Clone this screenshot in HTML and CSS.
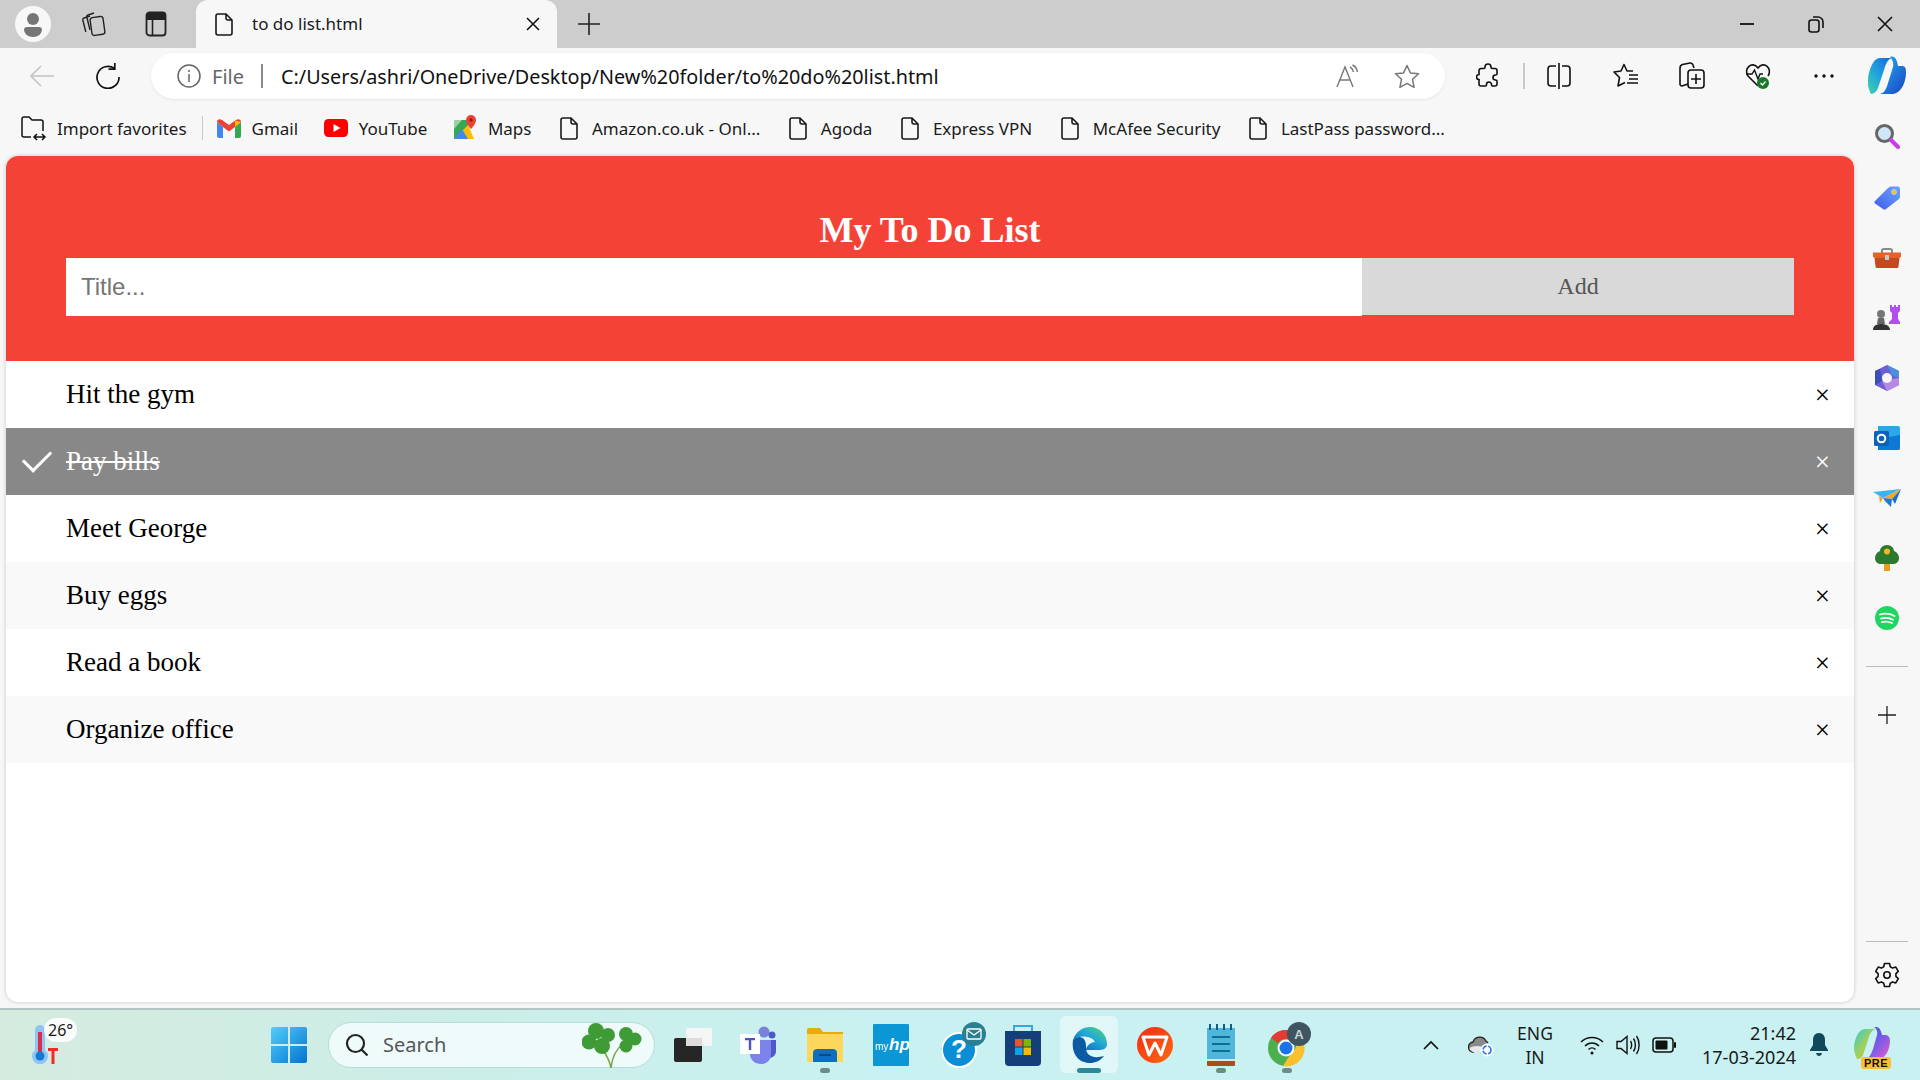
FILE: index.html
```html
<!DOCTYPE html>
<html lang="en">
<head>
<meta charset="utf-8">
<title>to do list.html</title>
<link rel="stylesheet" href="styles.css">
</head>
<body>
<svg class="defs" width="0" height="0" aria-hidden="true">
  <defs>
    <symbol id="doc" viewBox="0 0 18 23"><path d="M1 3a2 2 0 0 1 2-2h8l6 6v13a2 2 0 0 1-2 2H3a2 2 0 0 1-2-2zM11 1v4a2 2 0 0 0 2 2h4" fill="none" stroke="#1a1a1a" stroke-width="1.6" stroke-linejoin="round"/></symbol>
    <linearGradient id="copilotA" x1="0" y1="1" x2="1" y2="0"><stop offset="0" stop-color="#3dd6a8"/><stop offset=".5" stop-color="#1f9fe0"/><stop offset="1" stop-color="#1665d8"/></linearGradient>
    <linearGradient id="copilotB" x1="0" y1="0" x2="1" y2="1"><stop offset="0" stop-color="#22b8ef"/><stop offset="1" stop-color="#1b3fc4"/></linearGradient>
    <linearGradient id="tagG" x1="0" y1="1" x2="1" y2="0"><stop offset="0" stop-color="#3d5cf0"/><stop offset="1" stop-color="#6ea4fb"/></linearGradient>
    <linearGradient id="winG" x1="0" y1="0" x2="1" y2="1"><stop offset="0" stop-color="#4fd0fb"/><stop offset="1" stop-color="#0672cf"/></linearGradient>
    <linearGradient id="edgeG" x1="0" y1="1" x2="1" y2="0"><stop offset="0" stop-color="#0b57a8"/><stop offset=".55" stop-color="#1fa8d8"/><stop offset="1" stop-color="#5cd86c"/></linearGradient>
    <linearGradient id="wpsG" x1="0" y1="0" x2="1" y2="1"><stop offset="0" stop-color="#f62a12"/><stop offset="1" stop-color="#fb6a12"/></linearGradient>
    <linearGradient id="preG" x1="0" y1="0" x2="1" y2="1"><stop offset="0" stop-color="#33c9d8"/><stop offset=".5" stop-color="#9fd25a"/><stop offset="1" stop-color="#f0a040"/></linearGradient>
    <linearGradient id="preH" x1="0" y1="0" x2="1" y2="1"><stop offset="0" stop-color="#2a56e0"/><stop offset=".6" stop-color="#8a5be6"/><stop offset="1" stop-color="#ee5ec0"/></linearGradient>
  </defs>
</svg>

<div class="tabbar">
  <div class="tab-left">
    <span class="avatar"><svg width="36" height="36" viewBox="0 0 36 36"><circle cx="18" cy="18" r="18" fill="#f7f7f7"/><circle cx="18" cy="13" r="6" fill="#757575"/><path d="M9 23a3 3 0 0 1 3-2h12a3 3 0 0 1 3 2c0 5-4 8-9 8s-9-3-9-8z" fill="#757575"/></svg></span>
    <span class="tab-tool"><svg width="26" height="28" viewBox="0 0 26 28" fill="none" stroke="#222" stroke-width="1.4"><path d="M10 6 4 8c-1 .4-1.400 1-1.200 2l3 12"/><path d="M14 3 8 5c-1 .4-1.400 1-1.200 2l3.200 13"/><rect x="11" y="7" width="13" height="18" rx="2.500" transform="rotate(-8 17 16)"/></svg></span>
    <span class="tab-tool"><svg width="22" height="26" viewBox="0 0 22 26"><rect x="1.500" y="1.500" width="19" height="23" rx="3" fill="none" stroke="#222" stroke-width="1.800"/><path d="M1.500 4.500a3 3 0 0 1 3-3h13a3 3 0 0 1 3 3V9h-19z" fill="#222"/><path d="M7.500 9v15" stroke="#222" stroke-width="1.600"/></svg></span>
  </div>
  <div class="tab">
    <svg width="18" height="23"><use href="#doc"/></svg>
    <span class="tab-title">to do list.html</span>
    <svg class="tab-close" width="14" height="14" viewBox="0 0 14 14"><path d="M1 1l12 12M13 1 1 13" stroke="#111" stroke-width="1.600"/></svg>
  </div>
  <span class="tab-new"><svg width="22" height="22" viewBox="0 0 22 22"><path d="M11 0v22M0 11h22" stroke="#222" stroke-width="1.600"/></svg></span>
  <div class="win-ctrls">
    <span class="win-btn"><svg width="16" height="16" viewBox="0 0 16 16"><path d="M1 8h14" stroke="#111" stroke-width="1.800"/></svg></span>
    <span class="win-btn"><svg width="16" height="18" viewBox="0 0 16 18" fill="none" stroke="#111" stroke-width="1.600"><rect x="1" y="5" width="10" height="12" rx="2.500"/><path d="M5 2h5a5 5 0 0 1 5 5v6"/></svg></span>
    <span class="win-btn"><svg width="16" height="16" viewBox="0 0 16 16"><path d="M1 1l14 14M15 1 1 15" stroke="#111" stroke-width="1.600"/></svg></span>
  </div>
</div>

<div class="toolbar">
  <span class="tool"><svg width="24" height="22" viewBox="0 0 24 22" fill="none" stroke="#c4c4c4" stroke-width="1.600"><path d="M24 11H1M11 1 1 11l10 10"/></svg></span>
  <span class="tool"><svg width="24" height="26" viewBox="0 0 24 26" fill="none" stroke="#111" stroke-width="1.700"><path d="M18.500 5.500A11 11 0 1 0 23 14"/><path d="M18.800 0v6.200h-6.300"/></svg></span>
  <div class="address">
    <svg width="24" height="24" viewBox="0 0 24 24" fill="none" stroke="#666" stroke-width="1.500"><circle cx="12" cy="12" r="11"/><path d="M12 10v8M12 6v2"/></svg>
    <span class="addr-file">File</span>
    <span class="addr-sep"></span>
    <span class="addr-url">C:/Users/ashri/OneDrive/Desktop/New%20folder/to%20do%20list.html</span>
    <span class="addr-right">
      <svg width="24" height="24" viewBox="0 0 24 24" fill="none" stroke="#777" stroke-width="1.400"><path d="M1 23 9 3l8 20M4 16h10"/><path d="M14 3c2 1 3 2.500 3.500 5M16.500 1c3 1.500 4.500 3.500 5 7"/></svg>
      <svg width="26" height="25" viewBox="0 0 26 25" fill="none" stroke="#777" stroke-width="1.500"><path d="m13 1.500 3.400 7.400 8.100.9-6 5.500 1.600 8-7.100-4-7.100 4 1.600-8-6-5.500 8.100-.9z" stroke-linejoin="round"/></svg>
    </span>
  </div>
  <span class="tool"><svg width="24" height="26" viewBox="0 0 24 26" fill="none" stroke="#111" stroke-width="1.600"><path d="M9 4a3 3 0 0 1 6 0c0 1 0 1.500 1 1.500h3a2 2 0 0 1 2 2V11c0 1-.5 1-1.500 1a2.500 2.500 0 0 0 0 5c1 0 1.500 0 1.500 1v3a2 2 0 0 1-2 2h-2.500c-1 0-1-.5-1-1.500a2.500 2.500 0 0 0-5 0c0 1 0 1.500-1 1.500H5a2 2 0 0 1-2-2v-3c0-1 .5-1.200 0-1.500a2.500 2.500 0 0 1 0-5c.5-.3 0-.5 0-1.500V7.500a2 2 0 0 1 2-2h3c1 0 1-.5 1-1.500z" stroke-linejoin="round"/></svg></span>
  <span class="tool-sep"></span>
  <span class="tool"><svg width="24" height="26" viewBox="0 0 24 26" fill="none" stroke="#111" stroke-width="1.600"><path d="M9 3H4a3 3 0 0 0-3 3v14a3 3 0 0 0 3 3h5M15 3h5a3 3 0 0 1 3 3v14a3 3 0 0 1-3 3h-5M12 0v26"/></svg></span>
  <span class="tool"><svg width="26" height="26" viewBox="0 0 26 26" fill="none" stroke="#111" stroke-width="1.600" stroke-linejoin="round"><path d="M20 8h-6L11 1.500 8 8l-7 1 5.500 5.500L5 23l7-3.500"/><path d="M16 12h9M16 16h9M14 20h11"/></svg></span>
  <span class="tool"><svg width="26" height="28" viewBox="0 0 26 28" fill="none" stroke="#111" stroke-width="1.600"><path d="M9 22 3 24c-1 0-1.700-.5-2-1.500L1 6c0-2 1-3 2.500-3.500L11 1c1.500-.3 2.500.5 3 2l1 3"/><rect x="9" y="8" width="16" height="18" rx="3"/><path d="M17 12v10M12 17h10"/></svg></span>
  <span class="tool"><svg width="26" height="30" viewBox="0 0 26 30"><path d="M13 25 3 15C-2 8 7-1 13 7c6-8 15 1 10 8" fill="none" stroke="#111" stroke-width="1.600"/><path d="M1 13h6l2.500-4 3.500 9 2-5h3" fill="none" stroke="#111" stroke-width="1.400"/><circle cx="18" cy="22" r="6" fill="#177a2a"/><path d="m15.500 22 2 2 3-3.500" fill="none" stroke="#fff" stroke-width="1.400"/></svg></span>
  <span class="tool"><svg width="20" height="4" viewBox="0 0 20 4" fill="#111"><circle cx="2" cy="2" r="1.700"/><circle cx="10" cy="2" r="1.700"/><circle cx="18" cy="2" r="1.700"/></svg></span>
  <span class="tool tool-copilot"><svg width="38" height="40" viewBox="0 0 38 40"><path d="M12 2h12c-4 1-6 5-8 12L10 32c-1 3-4 6-7 6-2-4-4-9-3-15 1-9 5-21 12-21z" fill="url(#copilotA)"/><path d="M22 1c5-2 7 3 8 9h4c3 0 4 2 4 6 0 12-6 22-14 22H12c4-1 6-4 8-11l5-16c1-4-1-8-3-10z" fill="url(#copilotB)"/></svg></span>
</div>

<div class="middle">
  <div class="content-col">
    <div class="bookmarks">
      <span class="bm">
        <svg width="26" height="26" viewBox="0 0 26 26" fill="none" stroke="#111" stroke-width="1.500"><path d="M11 22H4a2 2 0 0 1-2-2V4a2 2 0 0 1 2-2h5l3 3h9a2 2 0 0 1 2 2v9"/><path d="M14 22h11M17 19l-3 3 3 3M22 19l3 3-3 3"/></svg>
        <span>Import favorites</span>
      </span>
      <span class="bm-sep"></span>
      <span class="bm">
        <svg width="24" height="19" viewBox="0 0 24 19"><path d="M0 3v14a2 2 0 0 0 2 2h4V8z" fill="#4285f4"/><path d="M24 3v14a2 2 0 0 1-2 2h-4V8z" fill="#34a853"/><path d="M0 3c0-3 3-3.500 5-2l7 5 7-5c2-1.500 5-1 5 2l-6 5-6 4.500L6 8z" fill="#ea4335"/><path d="M18 1.500 24 3l-6 5z" fill="#fbbc04"/></svg>
        <span>Gmail</span>
      </span>
      <span class="bm">
        <svg width="24" height="18" viewBox="0 0 24 18"><rect width="24" height="18" rx="4.500" fill="#f00"/><path d="m9.500 5 7 4-7 4z" fill="#fff"/></svg>
        <span>YouTube</span>
      </span>
      <span class="bm">
        <svg width="24" height="26" viewBox="0 0 24 26"><path d="M1 5h14v19H1z" fill="#35a853"/><path d="M1 24 15 10l6 14z" fill="#fbbc04"/><path d="M1 24 9 14l6 10z" fill="#4285f4"/><path d="M1 5h8L1 14z" fill="#9fd0a5"/><path d="M18 0a5 5 0 0 1 5 5c0 4-5 9-5 9s-5-5-5-9a5 5 0 0 1 5-5z" fill="#ea4335"/><circle cx="18" cy="5" r="1.700" fill="#8e1d14"/></svg>
        <span>Maps</span>
      </span>
      <span class="bm"><svg class="bm-doc" width="18" height="23"><use href="#doc"/></svg><span>Amazon.co.uk - Onl...</span></span>
      <span class="bm"><svg class="bm-doc" width="18" height="23"><use href="#doc"/></svg><span>Agoda</span></span>
      <span class="bm"><svg class="bm-doc" width="18" height="23"><use href="#doc"/></svg><span>Express VPN</span></span>
      <span class="bm"><svg class="bm-doc" width="18" height="23"><use href="#doc"/></svg><span>McAfee Security</span></span>
      <span class="bm"><svg class="bm-doc" width="18" height="23"><use href="#doc"/></svg><span>LastPass password...</span></span>
    </div>

    <main class="page">
      <header class="todo-head">
        <h2 class="todo-title">My To Do List</h2>
        <div class="todo-form">
          <input class="todo-input" type="text" placeholder="Title...">
          <button class="todo-add" type="button">Add</button>
        </div>
      </header>
      <ul class="todo-list">
        <li class="todo-item"><span>Hit the gym</span><span class="todo-close">×</span></li>
        <li class="todo-item is-checked"><span class="todo-text-done">Pay bills</span><span class="todo-close">×</span></li>
        <li class="todo-item"><span>Meet George</span><span class="todo-close">×</span></li>
        <li class="todo-item"><span>Buy eggs</span><span class="todo-close">×</span></li>
        <li class="todo-item"><span>Read a book</span><span class="todo-close">×</span></li>
        <li class="todo-item"><span>Organize office</span><span class="todo-close">×</span></li>
      </ul>
    </main>
  </div>

  <aside class="sidebar">
    <span class="side-icon"><svg width="26" height="26" viewBox="0 0 26 26"><circle cx="10.500" cy="10.500" r="8" fill="#cfe6f7" stroke="#666" stroke-width="3"/><path d="m17 17 7 7" stroke="#c83ce8" stroke-width="4" stroke-linecap="round"/></svg></span>
    <span class="side-icon"><svg width="26" height="24" viewBox="0 0 26 24"><path d="M1 15 14 2c1-1 2-1.500 3-1.500h7c1 0 2 1 2 2v8c0 1-.5 2-1 2.500L12 23c-1 1-2 1-3 0L1 17.500c-.7-.7-.7-1.800 0-2.500z" fill="url(#tagG)"/><circle cx="20" cy="6" r="2.500" fill="#f5c518" stroke="#b9c0ff"/></svg></span>
    <span class="side-icon"><svg width="28" height="20" viewBox="0 0 28 20"><path d="M9 5V2.500C9 1.500 10 1 11 1h6c1 0 2 .5 2 1.500V5" fill="none" stroke="#8a8a8a" stroke-width="2"/><path d="M0 4.500h28V9L26 10H2L0 9z" fill="#e2622a"/><path d="M1.500 10h25l-1 8.500c0 1-1 1.500-2 1.500H4.500c-1 0-2-.5-2-1.500z" fill="#c24a1e"/><rect x="12" y="7" width="4" height="5" fill="#c9c9c9"/></svg></span>
    <span class="side-icon"><svg width="28" height="26" viewBox="0 0 28 26"><path d="M17 0h2v2h2V0h2v2h2V0h2v6l-2 2v6l2 3v2H16v-2l3-3V8l-2-2z" fill="#b24df0"/><circle cx="8" cy="9" r="4" fill="#777"/><path d="M5 13h6l1 6H4z" fill="#666"/><path d="M0 25c0-4 3-6 8-6s9 2 9 6z" fill="#333"/></svg></span>
    <span class="side-icon"><svg width="24" height="26" viewBox="0 0 24 26"><path d="M12 0 24 6v14l-12 6L0 20V6z" fill="#6d5fd6"/><path d="M12 0 24 6v7l-7-3z" fill="#4a8fe0"/><path d="M0 6l5-2 2 12-7 4z" fill="#3a4fb8"/><path d="m7 16 17-3v7l-12 6z" fill="#b48ae6"/><circle cx="12" cy="13" r="5" fill="#f7f7f7"/></svg></span>
    <span class="side-icon"><svg width="26" height="24" viewBox="0 0 26 24"><path d="M4 0h20a2 2 0 0 1 2 2v20a2 2 0 0 1-2 2H4z" fill="#28a8ea"/><path d="M4 13l22-4v13a2 2 0 0 1-2 2H4z" fill="#0f78d4"/><rect y="5" width="15" height="15" rx="1.500" fill="#0b62b8"/><circle cx="7.500" cy="12.500" r="3.800" fill="none" stroke="#fff" stroke-width="2"/></svg></span>
    <span class="side-icon"><svg width="28" height="18" viewBox="0 0 28 18"><path d="M0 3 28 0 10 9z" fill="#38b4f4"/><path d="m10 9 18-9-9 10z" fill="#f2a91d"/><path d="M6 7 10 9l-3 5z" fill="#f29a1d"/><path d="m10 9 9 1-1 8-6-6z" fill="#1e78e0"/><path d="M28 0 19 10l3 5z" fill="#1e6bd0"/></svg></span>
    <span class="side-icon"><svg width="24" height="26" viewBox="0 0 24 26"><rect x="9" y="17" width="6" height="9" rx="1" fill="#e89b1c"/><path d="M12 0c4 0 7 3 7 6 3 1 5 4 5 7 0 4-3 6-6 6H6c-3 0-6-2-6-6 0-3 2-6 5-7 0-3 3-6 7-6z" fill="#2b7a2d"/><circle cx="12" cy="6.500" r="3" fill="#f3b61f"/></svg></span>
    <span class="side-icon"><svg width="24" height="24" viewBox="0 0 24 24"><circle cx="12" cy="12" r="12" fill="#1ed760"/><path d="M5 8.500c5-1.500 10-1 14.500 1.500M6 12.500c4-1 8.500-.8 12 1.300M7 16c3.500-.8 7-.5 10 1" fill="none" stroke="#fff" stroke-width="1.800" stroke-linecap="round"/></svg></span>
    <span class="side-line side-line-top"></span>
    <span class="side-add"><svg width="18" height="18" viewBox="0 0 18 18"><path d="M9 0v18M0 9h18" stroke="#222" stroke-width="1.300"/></svg></span>
    <span class="side-line side-line-bottom"></span>
    <span class="side-gear"><svg width="26" height="26" viewBox="0 0 26 26" fill="none" stroke="#111" stroke-width="1.600" stroke-linejoin="round"><path d="M10.500 1.500h5l.8 3.300 2.300 1.300 3.200-1 2.500 4.300-2.400 2.300v2.600l2.400 2.300-2.500 4.300-3.200-1-2.300 1.300-.8 3.300h-5l-.8-3.300-2.300-1.300-3.200 1L1.700 16.600l2.400-2.300v-2.600L1.700 9.400l2.500-4.300 3.200 1 2.300-1.300z"/><circle cx="13" cy="13" r="3.200"/></svg></span>
  </aside>
</div>

<footer class="taskbar">
  <div class="weather">
    <svg width="30" height="42" viewBox="0 0 30 42"><path d="M3 6a5 5 0 0 1 10 0v20a8 8 0 1 1-10 0z" fill="#8fc4f4"/><path d="M6 8h4v20H6z" fill="#d8304a"/><circle cx="8" cy="32" r="4.500" fill="#1479d2"/><path d="M16 24h10v3h-3.500v13h-3V27H16z" fill="#f02a24"/></svg>
    <span class="weather-temp">26°</span>
  </div>
  <span class="task-slot"><svg width="36" height="36" viewBox="0 0 36 36"><path d="M0 2a2 2 0 0 1 2-2h15v17H0zM19 0h15a2 2 0 0 1 2 2v15H19zM0 19h17v17H2a2 2 0 0 1-2-2zM19 19h17v15a2 2 0 0 1-2 2H19z" fill="url(#winG)"/></svg></span>
  <div class="search">
    <svg width="24" height="24" viewBox="0 0 24 24" fill="none" stroke="#222" stroke-width="2.200"><circle cx="10.500" cy="10.500" r="8.500"/><path d="m16.500 16.500 6 6"/></svg>
    <span class="search-text">Search</span>
    <svg class="search-clover" width="60" height="46" viewBox="0 0 60 46"><path d="M29 46c1-10 4-18 12-24M29 46c-1-6-4-12-8-18" stroke="#7ca44a" stroke-width="1.500" fill="none"/><g fill="#3f9b35"><circle cx="14" cy="9" r="8"/><circle cx="7" cy="20" r="7.500"/><circle cx="20" cy="24" r="8"/><circle cx="26" cy="13" r="7"/><circle cx="44" cy="12" r="7"/><circle cx="53" cy="17" r="6.500"/><circle cx="44" cy="24" r="6.500"/></g></svg>
  </div>
  <span class="task-slot"><svg width="38" height="34" viewBox="0 0 38 34"><rect x="12" y="0" width="26" height="18" rx="2" fill="#f5f5f5"/><rect y="10" width="28" height="24" rx="2" fill="#262626"/><rect x="12" y="10" width="16" height="8" fill="#dcdcdc"/></svg></span>
  <span class="task-slot"><svg width="38" height="38" viewBox="0 0 38 38"><circle cx="24" cy="6" r="5.500" fill="#7b83d9"/><circle cx="32" cy="9" r="3.500" fill="#5059c9"/><path d="M28 14h8v11c0 4-3 7-7 7z" fill="#5059c9"/><path d="M10 14h21v14c0 6-4 10-10 10s-11-4-11-10z" fill="#7b83eb"/><rect y="8" width="20" height="20" fill="#fff"/><path d="M5 12h10v2.200h-3.800V24H8.800v-9.800H5z" fill="#4b53bc"/></svg></span>
  <span class="task-slot has-dot"><svg width="36" height="36" viewBox="0 0 36 36"><path d="M0 3a2 2 0 0 1 2-2h11l3 4h20v30H0z" fill="#e8ab0f"/><path d="M0 7h36v28H0z" fill="#fdd65c"/><path d="M6 35V26c0-3 2-4 4-4h16c2 0 4 1 4 4v9z" fill="#0b6fc2"/><path d="M12 28h12" stroke="#063f78" stroke-width="1.500"/></svg></span>
  <span class="task-slot"><svg width="36" height="42" viewBox="0 0 36 42"><rect width="36" height="42" rx="1" fill="#0b96d6"/><text x="2" y="26" class="hp-my">my</text><text x="16" y="26" class="hp-hp">hp</text></svg></span>
  <span class="task-slot"><svg class="help-svg" width="46" height="50" viewBox="0 0 46 50"><circle cx="17" cy="30" r="17" fill="#0a8fd6" stroke="#fff" stroke-width="2"/><text x="17" y="38" class="help-q">?</text><circle cx="32" cy="14" r="12" fill="#2b7f90"/><rect x="25" y="9" width="14" height="10" rx="1" fill="none" stroke="#fff" stroke-width="1.300"/><path d="m25 10 7 5 7-5" fill="none" stroke="#fff" stroke-width="1.300"/></svg></span>
  <span class="task-slot"><svg width="36" height="42" viewBox="0 0 36 42"><path d="M9 8V2h18v6" fill="none" stroke="#36a8e0" stroke-width="2"/><path d="M0 7h36v31a4 4 0 0 1-4 4H4a4 4 0 0 1-4-4z" fill="#143f78"/><rect x="10" y="15" width="7.500" height="7.500" fill="#e8542c"/><rect x="18.500" y="15" width="7.500" height="7.500" fill="#7eb800"/><rect x="10" y="23.500" width="7.500" height="7.500" fill="#0da3ea"/><rect x="18.500" y="23.500" width="7.500" height="7.500" fill="#fdb900"/></svg></span>
  <span class="task-slot is-active"><svg width="36" height="36" viewBox="0 0 36 36"><path d="M2 13C5 4 12 0 19 0c10 0 17 8 17 17 0 5-4 6-9 6H15c0-4 5-8 9-8-2-6-16-8-22-2z" fill="url(#edgeG)"/><path d="M2 13c6-6 14-3 13 8 0 8 8 11 18 8-4 5-9 7-14 7C8 36 0 27 2 13z" fill="#0c59a4"/></svg></span>
  <span class="task-slot"><svg width="36" height="42" viewBox="0 0 36 42"><circle cx="18" cy="21" r="18" fill="url(#wpsG)"/><path d="M6 13h24l-6 18-6-12-6 12z" fill="none" stroke="#fff" stroke-width="3" stroke-linejoin="round"/></svg></span>
  <span class="task-slot has-dot"><svg width="28" height="42" viewBox="0 0 28 42"><path d="M0 4h28v31H0z" fill="#4fb6dc"/><rect y="35" width="28" height="7" rx="1" fill="#a3511a"/><rect y="35" width="28" height="2" fill="#e8e0d0"/><path d="M3 0v6M10 0v6M17 0v6M24 0v6" stroke="#10607c" stroke-width="2"/><path d="M5 13h18M5 20h18M5 27h18" stroke="#0f6d8e" stroke-width="2"/></svg></span>
  <span class="task-slot has-dot"><svg class="chrome-svg" width="44" height="50" viewBox="0 0 44 50"><circle cx="19" cy="28" r="18" fill="#4caf50"/><path d="M19 10a18 18 0 0 1 16 9H19a9 9 0 0 0-8 4L4 18a18 18 0 0 1 15-8z" fill="#e53935"/><path d="M35 19a18 18 0 0 1-19 27l8-13a9 9 0 0 0 3-14z" fill="#fbc02d"/><circle cx="19" cy="28" r="8.500" fill="#fff"/><circle cx="19" cy="28" r="6.500" fill="#1a73e8"/><circle cx="32" cy="14" r="12" fill="#3f5560"/><text x="32" y="19" class="chrome-a">A</text></svg></span>

  <div class="tray">
    <span class="tray-chev"><svg width="16" height="10" viewBox="0 0 16 10" fill="none" stroke="#111" stroke-width="1.700"><path d="m1 9 7-7 7 7"/></svg></span>
    <span class="tray-cloud"><svg width="26" height="24" viewBox="0 0 26 24"><path d="M6 19a5 5 0 0 1-1-10 7 7 0 0 1 13-1 5 5 0 0 1 2 2" fill="#8a8a8a" stroke="#222" stroke-width="1.300"/><path d="M1.500 15c3-2 9-3 13-1l-1 5H6a5 5 0 0 1-4.500-4z" fill="#e8e8e8"/><circle cx="19" cy="17" r="6.500" fill="#fff"/><circle cx="19" cy="17" r="4" fill="none" stroke="#1a73e8" stroke-width="1.500" stroke-dasharray="5 1.500"/></svg></span>
    <span class="tray-lang"><span>ENG</span><span>IN</span></span>
    <span class="tray-sys">
      <svg width="24" height="20" viewBox="0 0 24 20" fill="none" stroke="#111" stroke-width="1.500"><path d="M1 7c6-6 16-6 22 0M5 11c4-4 10-4 14 0M8.500 14.500c2-2 5-2 7 0"/><circle cx="12" cy="18" r="1.500" fill="#111" stroke="none"/></svg>
      <svg width="24" height="22" viewBox="0 0 24 22" fill="none" stroke="#111" stroke-width="1.400"><path d="M1 7.500v7h4l6 5V2.500l-6 5zM14.500 7c1.500 2 1.500 6 0 8M17.500 4.500c2.500 3.500 2.500 9.500 0 13M20.500 2c3.500 5 3.500 13 0 18"/></svg>
      <svg width="24" height="16" viewBox="0 0 24 16"><rect x="1" y="1" width="20" height="14" rx="3" fill="none" stroke="#111" stroke-width="1.500"/><rect x="3.500" y="3.500" width="12" height="9" rx="1" fill="#111"/><rect x="22" y="5" width="2" height="6" rx="1" fill="#111"/></svg>
    </span>
    <span class="tray-clock"><span>21:42</span><span>17-03-2024</span></span>
    <span class="tray-bell"><svg width="20" height="24" viewBox="0 0 20 24" fill="#12495a"><path d="M10 0c4 0 6 3 6 7v5l3 5v1H1v-1l3-5V7c0-4 2-7 6-7z"/><path d="M7 20h6c-.5 2-1.500 3-3 3s-2.500-1-3-3z"/></svg></span>
    <span class="tray-pre">
      <svg width="36" height="36" viewBox="0 0 36 36"><path d="M11 2h11c-4 1-6 4-8 11L9 28c-1 2-3 4-6 4-2-4-3-8-3-13C1 11 5 2 11 2z" fill="url(#preG)"/><path d="M20 0c5-1 7 3 8 8h3c3 0 5 2 5 6 0 9-5 18-12 18H11c4-1 6-4 8-10l4-14c1-4-1-7-3-8z" fill="url(#preH)"/></svg>
      <span class="pre-badge">PRE</span>
    </span>
  </div>
</footer>
</body>
</html>
```

FILE: styles.css
```css
* { box-sizing: border-box; }
html, body { margin: 0; padding: 0; }
body {
  width: 1920px;
  height: 1080px;
  overflow: hidden;
  display: flex;
  flex-direction: column;
  background: #f7f7f7;
  font-family: "Noto Sans", "Open Sans", sans-serif;
  color: #111;
}
.defs { position: absolute; }
svg { display: block; flex: none; }

/* tab strip */
.tabbar { height: 48px; flex: none; display: flex; background: #cdcdcd; }
.tab-left { width: 196px; display: flex; align-items: center; padding-left: 15px; }
.avatar { width: 36px; height: 36px; margin-right: 10px; }
.tab-tool { width: 63px; display: flex; justify-content: center; }
.tab {
  width: 361px;
  height: 48px;
  display: flex;
  align-items: center;
  padding: 0 17px 0 19px;
  background: #f7f7f7;
  border-radius: 12px 12px 0 0;
}
.tab-title { flex: 1; margin-left: 19px; padding-bottom: 2px; font-size: 17px; color: #1a1a1a; }
.tab-new { width: 64px; display: flex; align-items: center; justify-content: center; }
.win-ctrls { margin-left: auto; display: flex; align-items: center; padding-right: 1px; }
.win-btn { width: 69px; display: flex; justify-content: center; }

/* toolbar */
.toolbar { height: 56px; flex: none; display: flex; align-items: center; padding-left: 9px; background: #f7f7f7; }
.tool { width: 66px; height: 48px; flex: none; display: flex; align-items: center; justify-content: center; }
.tool-sep { width: 2px; height: 26px; background: #c9c9c9; margin: 0 1px 0 2px; flex: none; }
.tool-sep + .tool + .tool { margin-left: 1px; }
.tool-copilot { width: 60px; }
.address {
  width: 1294px;
  height: 46px;
  margin: 0 10px;
  flex: none;
  display: flex;
  align-items: center;
  padding: 0 25px 0 26px;
  background: #fff;
  border-radius: 23px;
  box-shadow: 0 1px 3px rgba(0,0,0,.08);
}
.addr-file { margin-left: 11px; font-size: 20px; color: #666; }
.addr-sep { width: 2px; height: 24px; margin: 0 18px 0 17px; background: #8a8a8a; }
.addr-url { font-size: 19.8px; color: #111; white-space: nowrap; }
.addr-right { margin-left: auto; display: flex; align-items: center; gap: 34px; }

/* middle */
.middle { flex: 1; min-height: 0; display: flex; }
.content-col { width: 1854px; display: flex; flex-direction: column; }
.bookmarks { height: 52px; flex: none; display: flex; align-items: center; padding: 0 0 4px 20px; gap: 25.5px; font-size: 17px; color: #1a1a1a; }
.bm { display: flex; align-items: center; gap: 11px; white-space: nowrap; }
.bm-doc { margin: 0 3px; }
.bm-sep { width: 1px; height: 24px; background: #c8c8c8; margin: 0 -12px 0 -10px; }

/* the to do page */
.page {
  height: 846px;
  margin-left: 6px;
  background: #fff;
  border-radius: 12px;
  overflow: hidden;
  box-shadow: 0 0 4px rgba(0,0,0,.2);
  font-family: "Liberation Serif", "Times New Roman", serif;
}
.todo-head { padding: 45px 60px; background: #f44336; color: #fff; text-align: center; }
.todo-title { margin: 9px 0 7px; font-size: 36px; line-height: 41px; font-weight: 700; }
.todo-form { display: flex; align-items: flex-start; }
.todo-input {
  width: 75%;
  height: 58px;
  padding: 0 15px;
  border: 0;
  border-radius: 0;
  font: 24px "Liberation Sans", Arial, sans-serif;
  background: #fff;
}
.todo-input::placeholder { color: #757575; opacity: 1; }
.todo-add {
  width: 25%;
  height: 57px;
  padding: 0;
  border: 0;
  border-radius: 0;
  background: #d9d9d9;
  color: #555;
  font: 24px "Liberation Serif", "Times New Roman", serif;
}
.todo-list { margin: 0; padding: 0; list-style: none; }
.todo-item {
  position: relative;
  height: 67px;
  display: flex;
  align-items: center;
  justify-content: space-between;
  padding-left: 60px;
  font-size: 27px;
  color: #000;
  background: #fff;
}
.todo-item:nth-child(even) { background: #f9f9f9; }
.todo-close { padding: 1px 24px 0; }
.todo-item.is-checked { background: #888; color: #fff; }
.todo-text-done { text-decoration: line-through; }
.is-checked::before {
  content: "";
  position: absolute;
  top: 16px;
  left: 23px;
  width: 13px;
  height: 24px;
  border: solid #fff;
  border-width: 0 3px 3px 0;
  transform: rotate(45deg);
}

/* sidebar */
.sidebar { flex: 1; display: flex; flex-direction: column; align-items: center; padding-top: 2px; }
.side-icon { height: 60px; flex: none; display: flex; align-items: center; justify-content: center; }
.side-icon:first-child { margin-bottom: 2px; }
.side-line { width: 42px; height: 1px; flex: none; background: #bdbdbd; }
.side-line-top { margin-top: 18px; }
.side-add { margin-top: 39px; flex: none; }
.side-line-bottom { margin-top: auto; margin-bottom: 20px; }
.side-gear { margin-bottom: 20px; flex: none; }

/* taskbar */
.taskbar {
  height: 72px;
  flex: none;
  display: flex;
  align-items: center;
  border-top: 2px solid #b4c6c4;
  background: linear-gradient(90deg, #d5ebdf 0, #cbeee8 25%, #c9f1f1 45%, #c9f1f1 100%);
  color: #1a1a1a;
}
.weather { width: 256px; position: relative; padding-left: 32px; }
.weather-temp {
  position: absolute;
  top: -6px;
  left: 44px;
  padding: 1px 4px;
  font-size: 16px;
  background: rgba(255,255,255,.85);
  border-radius: 12px;
}
.task-slot {
  position: relative;
  width: 66px;
  height: 70px;
  flex: none;
  display: flex;
  align-items: center;
  justify-content: center;
}
.task-slot svg { position: relative; z-index: 1; }
.has-dot::after {
  content: "";
  position: absolute;
  bottom: 7px;
  left: 50%;
  width: 10px;
  height: 5px;
  margin-left: -5px;
  border-radius: 3px;
  background: #6f8a8c;
}
.is-active::before {
  content: "";
  position: absolute;
  top: 6px;
  right: 4px;
  bottom: 7px;
  left: 4px;
  border-radius: 6px;
  background: rgba(255,255,255,.45);
}
.is-active::after {
  content: "";
  position: absolute;
  bottom: 7px;
  left: 50%;
  width: 24px;
  height: 5px;
  margin-left: -12px;
  border-radius: 3px;
  background: #2b8a98;
  z-index: 1;
}
.search {
  width: 327px;
  height: 46px;
  margin: 0 5px 0 6px;
  flex: none;
  display: flex;
  align-items: center;
  padding: 0 12px 0 16px;
  background: #eefbfa;
  border: 1px solid #b6dcd8;
  border-radius: 23px;
}
.search-text { margin-left: 14px; padding-bottom: 2px; font-size: 20px; color: #555; }
.search-clover { margin-left: auto; }
.help-svg { margin-left: 16px; }
.chrome-svg { margin-left: 4px; }
.hp-my { font: 10px "Liberation Sans", sans-serif; fill: #fff; }
.hp-hp { font: italic 700 17px "Liberation Sans", sans-serif; fill: #fff; }
.help-q { font: 700 26px "Liberation Sans", sans-serif; fill: #fff; text-anchor: middle; }
.chrome-a { font: 700 13px "Liberation Sans", sans-serif; fill: #c8d4d8; text-anchor: middle; }

.tray { margin-left: auto; display: flex; align-items: center; height: 100%; font-size: 17.500px; }
.tray-chev { width: 16px; margin-right: 29px; }
.tray-cloud { width: 26px; margin-right: 21px; }
.tray-lang { width: 40px; display: flex; flex-direction: column; align-items: center; line-height: 24px; margin-right: 25px; }
.tray-sys { display: flex; align-items: center; gap: 12px; margin-right: 12px; }
.tray-clock { width: 108px; display: flex; flex-direction: column; align-items: flex-end; font-size: 18px; line-height: 24px; margin-right: 13px; }
.tray-bell { width: 20px; margin-right: 25px; }
.tray-pre { position: relative; width: 36px; margin-right: 30px; }
.pre-badge {
  position: absolute;
  left: 7px;
  bottom: -6px;
  padding: 0 3px;
  font: 700 11px/12px "Liberation Sans", sans-serif;
  letter-spacing: .5px;
  background: #fbc02d;
  color: #111;
  border-radius: 3px;
}
```
